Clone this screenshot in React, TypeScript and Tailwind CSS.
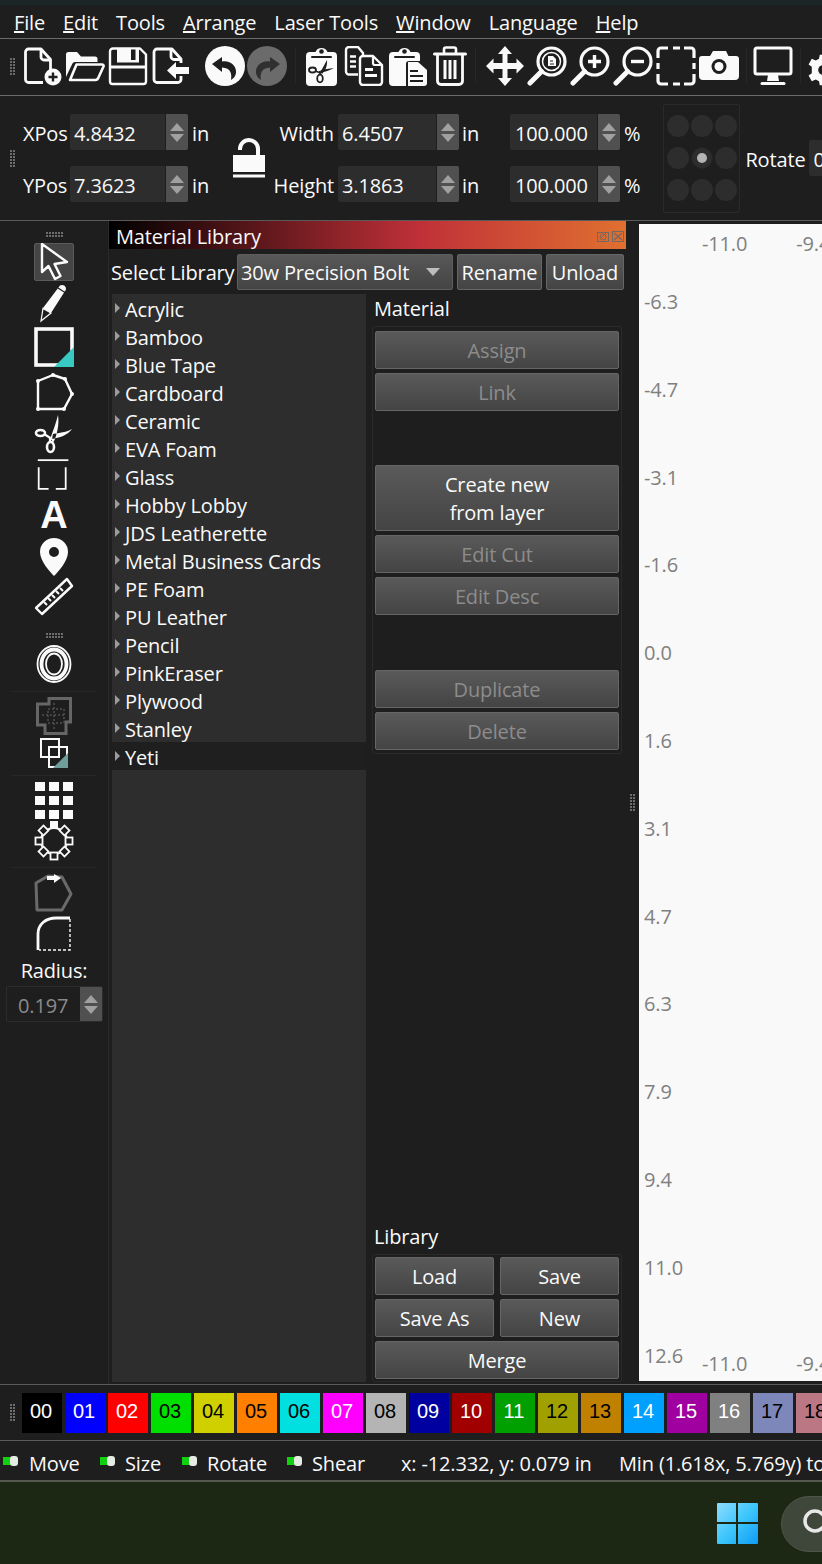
import React from "react";

const W = "#fafafa";

const Svg = ({ s = 40, h, vb, children, className }: any) => (
  <svg width={s} height={h ?? s} viewBox={vb ?? `0 0 40 ${h ?? s}`} fill="none" className={className ?? "shrink-0"}>
    {children}
  </svg>
);

const Gap = ({ w }: any) => <div className={`shrink-0 ${w}`} />;

const NewIcon = () => (
  <Svg>
    <path d="M3.500 6a3 3 0 0 1 3-3h12.500l9.500 10.500V24M21 36.500H6.500a3 3 0 0 1-3-3V6" stroke={W} strokeWidth="2.800" strokeLinejoin="round" />
    <path d="M19 3v8a3 3 0 0 0 3 3h7" stroke={W} strokeWidth="2.800" />
    <circle cx="31" cy="31" r="8.500" fill={W} />
    <path d="M31 26.500v9M26.500 31h9" stroke="#1e1e1e" strokeWidth="2.400" />
  </Svg>
);
const OpenIcon = () => (
  <Svg>
    <path d="M1 31V8.500a2.500 2.500 0 0 1 2.500-2.500H12l4 4.500h14a2.500 2.500 0 0 1 2.500 2.500v3H10a3 3 0 0 0-2.800 2L1 31Z" fill={W} />
    <path d="M11.500 18.500H37a1.500 1.500 0 0 1 1.500 2L33 32.500a3 3 0 0 1-2.500 1.500H5Z" stroke={W} strokeWidth="2.600" strokeLinejoin="round" />
  </Svg>
);
const SaveIcon = () => (
  <Svg>
    <path d="M2 5.500a3 3 0 0 1 3-3H32l6 6v27a2.500 2.500 0 0 1-2.500 2.500H4.500A2.500 2.500 0 0 1 2 35.500V5.500Z" stroke={W} strokeWidth="2.400" strokeLinejoin="round" />
    <path d="M9 2.500h22v14H9Z" fill={W} />
    <path d="M23 3.500h4.500v10.500H23Z" fill="#1e1e1e" />
    <path d="M2 21h36" stroke={W} strokeWidth="2.800" />
  </Svg>
);
const ImportIcon = () => (
  <Svg>
    <path d="M30 17v-4l-9-10H6a3 3 0 0 0-3 3v27.500a3 3 0 0 0 3 3h21a3 3 0 0 0 3-3V30" stroke={W} strokeWidth="2.800" strokeLinejoin="round" />
    <path d="M20 3.500v7a3 3 0 0 0 3 3h6.500" stroke={W} strokeWidth="2.800" />
    <path d="M16 24.500 25 16v5h13v7H25v5Z" fill={W} />
  </Svg>
);
const UndoIcon = ({ gray }: any) => (
  <Svg>
    <circle cx="20" cy="20" r="20" fill={gray ? "#6b6b6b" : W} />
    <g transform={gray ? "translate(40 0) scale(-1 1)" : undefined}>
      <path d="M7 18 17 11v4.500C25 14 32 20 31 27c-.5 3-2 5-5 7 1-6 0-12-9-12.500V26Z" fill={gray ? "#303030" : "#1e1e1e"} />
    </g>
  </Svg>
);
const CutPasteIcon = () => (
  <Svg s={31} h={40} vb="0 0 31 40">
    <path d="M4 6h5.500a6.500 6.500 0 0 1 12 0H27a4 4 0 0 1 4 4v26a4 4 0 0 1-4 4H4a4 4 0 0 1-4-4V10a4 4 0 0 1 4-4Z" fill={W} />
    <circle cx="15.500" cy="5.500" r="2.300" fill="#1e1e1e" />
    <path d="M6 11h19" stroke="#1e1e1e" strokeWidth="2" strokeLinecap="round" />
    <path d="M21 14c.5 5-1 10-5 14l-1.500-2c2-4 4.500-8 6.500-12ZM28 22c-4 2.500-8 3.500-12.500 4.500l-1-2.500c4-.5 9-1.500 13.500-2Z" fill="#1e1e1e" />
    <ellipse cx="6.500" cy="24" rx="3.500" ry="2.500" stroke="#1e1e1e" strokeWidth="1.800" />
    <ellipse cx="14" cy="32.500" rx="2.800" ry="3.800" stroke="#1e1e1e" strokeWidth="1.800" />
    <path d="M9 25l6 2M14 29v-4" stroke="#1e1e1e" strokeWidth="1.800" />
  </Svg>
);
const CopyIcon = () => (
  <Svg>
    <path d="M14 28.500H5a3 3 0 0 1-3-3V4a3 3 0 0 1 3-3h9l5 6v3" stroke={W} strokeWidth="2.400" strokeLinejoin="round" />
    <path d="M6 10.500h6M6 15.500h6M6 20.500h6" stroke={W} strokeWidth="2.400" />
    <path d="M19 10h10l9 9v17a3 3 0 0 1-3 3H19a3 3 0 0 1-3-3V13a3 3 0 0 1 3-3Z" stroke={W} strokeWidth="2.400" strokeLinejoin="round" />
    <path d="M29 10v7a2 2 0 0 0 2 2h7" stroke={W} strokeWidth="2.200" />
    <path d="M21 22h8v3h-8ZM21 28h12v3H21Z" fill={W} />
  </Svg>
);
const PasteIcon = () => (
  <Svg s={38} h={40} vb="0 0 38 40">
    <path d="M4 6h5.500a6.500 6.500 0 0 1 12 0H27a4 4 0 0 1 4 4v5H20a3 3 0 0 0-3 3v22H4a4 4 0 0 1-4-4V10a4 4 0 0 1 4-4Z" fill={W} />
    <circle cx="15.500" cy="5.500" r="2.300" fill="#1e1e1e" />
    <path d="M6 11h19" stroke="#1e1e1e" strokeWidth="2" strokeLinecap="round" />
    <path d="M19 16h10l9 8v13a3 3 0 0 1-3 3H19Z" fill={W} />
    <path d="M21 25h8M21 30h13M21 35h13" stroke="#1e1e1e" strokeWidth="2.200" />
  </Svg>
);
const TrashIcon = () => (
  <Svg s={34} h={40} vb="0 0 34 40">
    <path d="M1.500 8h31" stroke={W} strokeWidth="3" strokeLinecap="round" />
    <path d="M11 7V3.500a2 2 0 0 1 2-2h8a2 2 0 0 1 2 2V7" stroke={W} strokeWidth="2.600" />
    <path d="M4.500 9v26a3.500 3.500 0 0 0 3.500 3.500h18a3.500 3.500 0 0 0 3.500-3.500V9" stroke={W} strokeWidth="2.800" />
    <path d="M10.500 14v19h3V14ZM15.500 14v19h3V14ZM20.500 14v19h3V14Z" fill={W} />
  </Svg>
);
const MoveIcon = () => (
  <Svg s={38} h={40} vb="0 0 38 40">
    <path d="M19 0l7 8h-4.500v9H30.500v-4.500L38 20l-7.500 7.500V23H21.500v9H26l-7 8-7-8h4.500v-9H7.500v4.500L0 20l7.500-7.500V17h9V8H12Z" fill={W} />
  </Svg>
);
const Mag = ({ children }: any) => (
  <Svg>
    <circle cx="24.500" cy="15.500" r="13.500" stroke={W} strokeWidth="3.200" />
    <path d="M14.500 25.500 3 37" stroke={W} strokeWidth="5" strokeLinecap="round" />
    {children}
  </Svg>
);
const DashedIcon = () => (
  <Svg>
    <path d="M2 12V5a3 3 0 0 1 3-3h7M17 2h7M28 2h7a3 3 0 0 1 3 3v7M38 17v6M38 28v7a3 3 0 0 1-3 3h-7M24 38h-7M12 38H5a3 3 0 0 1-3-3v-7M2 23v-6" stroke={W} strokeWidth="3.200" />
  </Svg>
);
const CameraIcon = () => (
  <Svg>
    <path d="M3 10h8l3-5h13l2.500 5H37a3 3 0 0 1 3 3v17a4 4 0 0 1-4 4H4a4 4 0 0 1-4-4V13a3 3 0 0 1 3-3Z" fill={W} />
    <circle cx="20" cy="20.500" r="7.500" fill="#1e1e1e" />
    <circle cx="20" cy="20.500" r="4.500" fill={W} />
  </Svg>
);
const MonitorIcon = () => (
  <Svg>
    <rect x="2" y="2" width="36" height="26" rx="2" stroke={W} strokeWidth="3" />
    <path d="M15 29h10l1 6h-12Z" fill={W} />
    <path d="M9 37.500h22" stroke={W} strokeWidth="3" strokeLinecap="round" />
  </Svg>
);
const GearIcon = () => (
  <Svg s={32} vb="0 0 40 40" className="shrink-0 mt-[7px]">
    <path d="M16 1h8l1 5 4 2 5-2 4 7-4 3v8l4 3-4 7-5-2-4 2-1 5h-8l-1-5-4-2-5 2-4-7 4-3v-8L2 13l4-7 5 2 4-2Z" fill={W} />
    <circle cx="20" cy="20" r="6" fill="#1e1e1e" />
  </Svg>
);

const ToolSep = () => <div className="w-px h-[34px] bg-[#282828] shrink-0" />;

const Grip = ({ className }: any) => (
  <div className={`grid grid-cols-2 gap-px shrink-0 w-[5px] ${className ?? ""}`}>
    {Array.from({ length: 12 }).map((_, i) => (
      <span key={i} className="w-[2px] h-[2px] bg-[#6c6c6c]" />
    ))}
  </div>
);
const HGrip = () => (
  <div className="grid grid-cols-6 gap-px w-[17px] mx-auto">
    {Array.from({ length: 12 }).map((_, i) => (
      <span key={i} className="w-[2px] h-[2px] bg-[#6c6c6c]" />
    ))}
  </div>
);

const Spin = ({ value, w, dim, tw = "w-[23px]", pl = "pl-[4px]" }: any) => (
  <div className={`flex h-[36px] shrink-0 rounded-[2px] overflow-hidden ${w} ${dim ? "border border-[#2c2c2c]" : "bg-[#2d2d2d]"}`}>
    <div className={`flex-1 flex items-center pt-[4px] ${pl} ${dim ? "text-[#8a8a8a]" : ""}`}>{value}</div>
    <div className={`${tw} flex flex-col items-center justify-center gap-[3px] bg-[#505050] border-l border-[#1e1e1e]`}>
      <span className="w-0 h-0 border-x-[7px] border-x-transparent border-b-[8px] border-b-[#a0a0a0]" />
      <span className="w-0 h-0 border-x-[7px] border-x-transparent border-t-[8px] border-t-[#a0a0a0]" />
    </div>
  </div>
);

const Btn = ({ children, off, className }: any) => (
  <div
    className={`flex shrink-0 items-center justify-center text-center rounded-[2px] border border-[#666] bg-gradient-to-b from-[#5a5a5a] to-[#444] leading-[28px] pt-[2px] ${
      off ? "text-[#8c8c8c]" : ""
    } ${className ?? "h-[38px]"}`}
  >
    {children}
  </div>
);

const Lab = ({ children, className }: any) => <span className={`pt-[4px] ${className ?? ""}`}>{children}</span>;

const materials = [
  "Acrylic","Bamboo","Blue Tape","Cardboard","Ceramic","EVA Foam","Glass","Hobby Lobby","JDS Leatherette",
  "Metal Business Cards","PE Foam","PU Leather","Pencil","PinkEraser","Plywood","Stanley","Yeti",
];

const swatches: [string, string, string][] = [
  ["00","#000000","#fff"],["01","#0000ff","#fff"],["02","#ff0000","#fff"],["03","#00e000","#000"],
  ["04","#d0d000","#000"],["05","#ff8000","#000"],["06","#00e0e0","#000"],["07","#ff00ff","#fff"],
  ["08","#b4b4b4","#000"],["09","#0000a0","#fff"],["10","#a00000","#fff"],["11","#00a000","#fff"],
  ["12","#a0a000","#000"],["13","#c08000","#000"],["14","#00a0ff","#fff"],["15","#a000a0","#fff"],
  ["16","#808080","#fff"],["17","#7d87b9","#000"],["18","#bb7784","#000"],
];

const Toggle = () => (
  <span className="relative inline-block w-[15px] h-[10px] shrink-0">
    <span className="absolute left-0 top-[1px] w-[10px] h-[8px] bg-[#10d010]" />
    <span className="absolute right-0 top-0 w-[8px] h-[10px] rounded-[3px] bg-[#e4ece4]" />
  </span>
);

const SideSep = () => <div className="h-px w-[86px] shrink-0 bg-[#282828] mx-auto" />;

const Slot = ({ children, className }: any) => (
  <div className={`flex shrink-0 justify-center items-center ${className}`}>{children}</div>
);

function LeftTools() {
  return (
    <div className="w-[109px] shrink-0 border-r border-[#2a2a2a] flex flex-col items-stretch">
      <div className="h-[14px] shrink-0 pt-[11px]"><HGrip /></div>
      <Slot className="h-[8px]" />
      <div className="mx-auto shrink-0 w-[40px] h-[38px] rounded-[2px] bg-[#454545] border border-[#5a5a5a] flex items-center justify-center">
        <Svg s={30} h={38} vb="0 0 30 38">
          <path d="M3 1v28l6.500-6L16 36l5.500-3-6-12 12.500-2Z" fill="#3a3a3a" stroke={W} strokeWidth="2.400" strokeLinejoin="round" />
        </Svg>
      </div>
      <Slot className="h-[44px]">
        <Svg h={42} vb="0 0 40 42">
          <path d="M26 3.500a4 4 0 0 1 6 4L17 31l-10 8 2-13Z" fill={W} />
          <path d="M9 26.500l8 4.500-10 8Z" fill="#1e1e1e" stroke={W} strokeWidth="1.200" />
          <path d="M24 6l7 4.500" stroke="#1e1e1e" strokeWidth="1.200" />
        </Svg>
      </Slot>
      <Slot className="h-[44px]">
        <Svg>
          <rect x="2" y="2" width="36" height="36" stroke={W} strokeWidth="3.600" />
          <path d="M40 20v20H20Z" fill="#38c9c2" />
        </Svg>
      </Slot>
      <Slot className="h-[45px] pt-[2px]">
        <Svg>
          <path d="M19 2 31 6l7 15-8 15H4V8Z" stroke={W} strokeWidth="2.400" strokeLinejoin="round" />
          <g fill={W}><circle cx="19" cy="2" r="2" /><circle cx="31" cy="6" r="2" /><circle cx="38" cy="21" r="2" /><circle cx="30" cy="36" r="2" /><circle cx="4" cy="36" r="2" /><circle cx="4" cy="8" r="2" /></g>
        </Svg>
      </Slot>
      <Slot className="h-[42px]">
        <Svg>
          <path d="M24 0c1.500 9-1 21-5 28l-2.500-5C19 16 22 8 24 0ZM38 14c-5 3-13 4-19 5l-1 5c7-1 16-4 20-10Z" fill={W} />
          <ellipse cx="6.500" cy="18" rx="4.500" ry="3" stroke={W} strokeWidth="2.600" />
          <ellipse cx="16.500" cy="32" rx="3.500" ry="5" stroke={W} strokeWidth="2.600" />
          <path d="M10 19l8 5M16 27v-5" stroke={W} strokeWidth="2.200" />
        </Svg>
      </Slot>
      <Slot className="h-[38px]">
        <Svg s={36}>
          <path d="M2 1.500h34" stroke={W} strokeWidth="2" />
          <path d="M3 9.500v24h11M33 9.500v24H22" stroke={W} strokeWidth="2" />
        </Svg>
      </Slot>
      <Slot className="h-[42px]">
        <span className="text-[#fafafa] font-bold text-[38px] leading-[38px] [font-family:'Liberation_Sans',sans-serif]">A</span>
      </Slot>
      <Slot className="h-[42px]">
        <Svg s={30} h={40} vb="0 0 30 40">
          <path fillRule="evenodd" d="M15 1a14 14 0 0 1 14 14c0 9-10 20-14 24C11 35 1 24 1 15A14 14 0 0 1 15 1Zm0 9a5 5 0 1 0 0 10 5 5 0 0 0 0-10Z" fill={W} />
        </Svg>
      </Slot>
      <Slot className="h-[38px]">
        <Svg>
          <path d="M33 2 38 9 8 37 2 31Z" stroke={W} strokeWidth="2.400" strokeLinejoin="round" />
          <path d="M10 25l3 3M14 21l3 3M18 18l3 3M22 14l3 3M26 11l3 3" stroke={W} strokeWidth="2" />
        </Svg>
      </Slot>
      <div className="h-[19px] shrink-0 pt-[17px]"><HGrip /></div>
      <Slot className="h-[50px] pt-[8px]">
        <Svg s={36} h={38} vb="0 0 36 38">
          <ellipse cx="18" cy="19" rx="16.500" ry="18" stroke={W} strokeWidth="1.800" />
          <ellipse cx="18" cy="19" rx="12.500" ry="14.500" stroke={W} strokeWidth="3.800" />
          <ellipse cx="18" cy="19" rx="8" ry="10.500" stroke={W} strokeWidth="1.800" />
        </Svg>
      </Slot>
      <Slot className="h-[6px]" />
      <SideSep />
      <Slot className="h-[46px] pt-[2px]">
        <Svg s={36} h={38} vb="0 0 36 38">
          <path d="M1.500 7H13V1.500H34.500V25H30V36.500H9V28H1.500Z" stroke="#666" strokeWidth="3" />
          <path d="M12 12h16v14H12ZM18 6v26M6 18h22" stroke="#5c5c5c" strokeWidth="1.500" strokeDasharray="2 2" opacity="0.800" />
        </Svg>
      </Slot>
      <Slot className="h-[30px]">
        <Svg s={28} h={30} vb="0 0 28 30">
          <rect x="1" y="1" width="18" height="18" stroke={W} strokeWidth="2" />
          <rect x="9" y="9" width="18" height="20" stroke={W} strokeWidth="2" />
          <path d="M28 15v15H13Z" fill="#6f9d9a" />
        </Svg>
      </Slot>
      <Slot className="h-[7px]" />
      <SideSep />
      <Slot className="h-[44px] pt-[5px]">
        <div className="grid grid-cols-3 gap-x-[4px] gap-y-[5px]">
          {Array.from({ length: 9 }).map((_, i) => (
            <span key={i} className="w-[10px] h-[9px] bg-[#fafafa]" />
          ))}
        </div>
      </Slot>
      <Slot className="h-[41px]">
        <Svg>
          <circle cx="20" cy="20" r="13" stroke={W} strokeWidth="2" />
          <rect x="16" y="0" width="8" height="8" fill={W} />
          <g fill="#1e1e1e" stroke={W} strokeWidth="1.800">
            <rect x="16.500" y="31.500" width="7" height="7" />
            <rect x="1.500" y="16.500" width="7" height="7" />
            <rect x="31.500" y="16.500" width="7" height="7" />
            <rect x="6" y="6" width="7" height="7" transform="rotate(45 9.500 9.500)" />
            <rect x="27" y="6" width="7" height="7" transform="rotate(45 30.500 9.500)" />
            <rect x="6" y="27" width="7" height="7" transform="rotate(45 9.500 30.500)" />
            <rect x="27" y="27" width="7" height="7" transform="rotate(45 30.500 30.500)" />
          </g>
        </Svg>
      </Slot>
      <Slot className="h-[6px]" />
      <SideSep />
      <Slot className="h-[45px] pt-[6px]">
        <Svg>
          <path d="M14 2 28 3 37 20 28 36H3L2 9Z" stroke="#6a6a6a" strokeWidth="3" strokeLinejoin="round" />
          <path d="M13 2h7V0l7 4-7 5V6h-7Z" fill={W} />
        </Svg>
      </Slot>
      <Slot className="h-[42px]">
        <Svg s={36} h={36} vb="0 0 36 36">
          <path d="M2 34V18C2 8 10 2 20 2h14" stroke={W} strokeWidth="2.800" />
          <path d="M34 3v31H3" stroke={W} strokeWidth="1.400" strokeDasharray="3 2" />
        </Svg>
      </Slot>
      <div className="text-center shrink-0 h-[31px] leading-[31px]">Radius:</div>
      <div className="pl-[6px] shrink-0"><Spin value="0.197" w="w-[97px]" dim pl="pl-[11px]" /></div>
    </div>
  );
}

function Canvas() {
  const left = ["-6.3","-4.7","-3.1","-1.6","0.0","1.6","3.1","4.7","6.3","7.9","9.4","11.0","12.6"];
  return (
    <div className="flex-1 min-w-0 pt-[3px] pb-[3px]">
      <div className="relative h-full bg-[#f9f9f9] text-[#808080] overflow-hidden">
        <div className="absolute left-[63px] top-[6px] flex gap-[49px] whitespace-nowrap">
          <span>-11.0</span><span>-9.4</span>
        </div>
        <div className="absolute left-[63px] bottom-[3px] flex gap-[49px] whitespace-nowrap">
          <span>-11.0</span><span>-9.4</span>
        </div>
        <div className="absolute left-[5px] top-[64px] flex flex-col">
          {left.map((v) => (
            <span key={v} className="h-[87.800px] leading-[28px]">{v}</span>
          ))}
        </div>
      </div>
    </div>
  );
}

export default function App() {
  return (
    <div className="w-[822px] h-[1564px] bg-[#1e1e1e] overflow-hidden flex flex-col text-[#fafafa] text-[20px] leading-[28px] [font-family:'Open_Sans',sans-serif] tracking-[-0.15px]">
      {/* menu */}
      <div className="h-[39px] shrink-0 border-b border-[#6a6a6a] bg-[#1e1e1e] flex flex-col">
        <div className="h-[5px] bg-[#1b2427]" />
        <div className="flex-1 flex items-center pl-[14px] pt-[2px] gap-[18px] whitespace-nowrap">
          <span><u>F</u>ile</span><span><u>E</u>dit</span><span>Tools</span><span><u>A</u>rrange</span><span>Laser Tools</span><span><u>W</u>indow</span><span>Language</span><span><u>H</u>elp</span>
        </div>
      </div>
      {/* toolbar */}
      <div className="h-[57px] shrink-0 border-b border-[#6a6a6a] flex items-center pl-[10px] pb-[2px] overflow-hidden">
        <Grip className="mr-[7px]" />
        <div className="flex items-center gap-[3px] shrink-0">
          <NewIcon /><OpenIcon /><SaveIcon /><ImportIcon />
        </div>
        <Gap w="w-[14px]" />
        <UndoIcon />
        <Gap w="w-[2px]" />
        <UndoIcon gray />
        <Gap w="w-[8px]" /><ToolSep /><Gap w="w-[10px]" />
        <CutPasteIcon />
        <Gap w="w-[7px]" />
        <CopyIcon />
        <Gap w="w-[5px]" />
        <PasteIcon />
        <Gap w="w-[6px]" />
        <TrashIcon />
        <Gap w="w-[8px]" /><ToolSep /><Gap w="w-[10px]" />
        <MoveIcon />
        <Gap w="w-[3px]" />
        <Mag>
          <circle cx="24.500" cy="15.500" r="9" stroke={W} strokeWidth="1.500" />
          <path d="M21 10h5l3 3v7h-8Z" fill={W} />
          <path d="M23 15h3M23 18h4" stroke="#1e1e1e" strokeWidth="1.200" />
        </Mag>
        <Gap w="w-[3px]" />
        <Mag><path d="M24.500 9v13M18 15.500h13" stroke={W} strokeWidth="3.400" /></Mag>
        <Gap w="w-[3px]" />
        <Mag><path d="M18 15.500h13" stroke={W} strokeWidth="3.400" /></Mag>
        <Gap w="w-[3px]" />
        <DashedIcon />
        <Gap w="w-[3px]" />
        <CameraIcon />
        <Gap w="w-[7px]" /><ToolSep /><Gap w="w-[6px]" />
        <MonitorIcon />
        <Gap w="w-[7px]" /><ToolSep /><Gap w="w-[6px]" />
        <GearIcon />
      </div>
      {/* property bar */}
      <div className="h-[125px] shrink-0 border-b border-[#5a5a5a] flex items-center whitespace-nowrap overflow-hidden">
        <Grip className="ml-[10px] mr-[8px]" />
        <div className="grid grid-cols-[47px_118px_auto] gap-y-[16px] items-center w-[192px] shrink-0">
          <Lab>XPos</Lab><Spin value="4.8432" w="w-[118px]" /><Lab className="pl-[4px]">in</Lab>
          <Lab>YPos</Lab><Spin value="7.3623" w="w-[118px]" /><Lab className="pl-[4px]">in</Lab>
        </div>
        <div className="w-[50px] flex justify-end shrink-0">
          <Svg s={32} h={40} vb="0 0 32 40">
            <path d="M7 12v-1a9 9 0 0 1 18 0v7" stroke={W} strokeWidth="4" />
            <path d="M0 17h32v17H0Z" fill={W} />
            <path d="M0 36.500h32v3H0Z" fill={W} />
          </Svg>
        </div>
        <Gap w="w-[4px]" />
        <div className="grid grid-cols-[69px_121px_51px_110px_auto] gap-y-[16px] items-center shrink-0">
          <Lab className="text-right pr-[4px]">Width</Lab><Spin value="6.4507" w="w-[121px]" /><Lab className="pl-[3px]">in</Lab><Spin value="100.000" w="w-[110px]" pl="pl-[5px]" /><Lab className="pl-[4px]">%</Lab>
          <Lab className="text-right pr-[4px]">Height</Lab><Spin value="3.1863" w="w-[121px]" /><Lab className="pl-[3px]">in</Lab><Spin value="100.000" w="w-[110px]" pl="pl-[5px]" /><Lab className="pl-[4px]">%</Lab>
        </div>
        <Gap w="w-[23px]" />
        <div className="w-[77px] h-[109px] shrink-0 border border-[#2a2a2a] rounded-[2px] grid grid-cols-3 content-center justify-items-center gap-y-[10px] px-[2px]">
          {Array.from({ length: 9 }).map((_, i) => (
            <span key={i} className={`w-[22px] h-[22px] rounded-full bg-[#2d2d2d] flex items-center justify-center ${i === 4 ? "border border-[#242424]" : ""}`}>
              {i === 4 && <span className="w-[10px] h-[10px] rounded-full bg-[#b4b4b4]" />}
            </span>
          ))}
        </div>
        <Lab className="ml-[5px] shrink-0">Rotate</Lab>
        <div className="ml-[4px] h-[36px] w-[60px] bg-[#2d2d2d] rounded-[2px] flex items-center pl-[4px] pt-[4px] shrink-0">0</div>
      </div>
      {/* main */}
      <div className="h-[1163px] shrink-0 flex">
        <LeftTools />
        <div className="w-[517px] shrink-0 flex flex-col">
          <div className="h-[28px] shrink-0 bg-[linear-gradient(90deg,#000_0%,#c03038_60%,#e07030_100%)] flex items-center pl-[7px] justify-between pr-[2px] pt-[3px]">
            <span>Material Library</span>
            <span className="flex gap-[3px] items-center">
              <svg width="12" height="11" viewBox="0 0 12 11" fill="none"><rect x="0.500" y="1.500" width="11" height="9" stroke="#77685f" /><path d="M3 8l6-6" stroke="#77685f" /><circle cx="6" cy="6" r="3" stroke="#77685f" /></svg>
              <svg width="12" height="11" viewBox="0 0 12 11" fill="none"><rect x="0.500" y="0.500" width="11" height="10" stroke="#77685f" /><path d="M2 2l8 7M10 2 2 9" stroke="#77685f" strokeWidth="1.300" /></svg>
            </span>
          </div>
          <div className="h-[45px] shrink-0 flex items-center gap-[4px] pl-[2px] whitespace-nowrap">
            <span className="w-[122px] pt-[2px]">Select Library</span>
            <div className="w-[216px] h-[36px] bg-gradient-to-b from-[#585858] to-[#444] border border-[#5e5e5e] rounded-[2px] flex items-center justify-between pl-[3px] pr-[12px]">
              <span className="pt-[2px]">30w Precision Bolt</span>
              <span className="w-0 h-0 border-x-[7px] border-x-transparent border-t-[8px] border-t-[#bdbdbd]" />
            </div>
            <Btn className="w-[85px] h-[36px]">Rename</Btn>
            <Btn className="w-[78px] h-[36px]">Unload</Btn>
          </div>
          <div className="flex-1 min-h-0 flex pl-[3px] pb-[2px]">
            <div className="w-[254px] shrink-0 bg-[#2d2d2d]">
              {materials.map((m) => (
                <div key={m} className={`h-[28px] flex items-center pl-[3px] gap-[5px] ${m === "Yeti" ? "bg-[#1f1f1f]" : ""}`}>
                  <span className="w-0 h-0 border-y-[5px] border-y-transparent border-l-[5px] border-l-[#9c9c9c]" />
                  <span className="pt-[4px]">{m}</span>
                </div>
              ))}
            </div>
            <div className="w-[256px] shrink-0 pl-[6px] flex flex-col">
              <div className="h-[32px] shrink-0 pl-[2px] leading-[30px]">Material</div>
              <div className="w-[250px] shrink-0 border border-[#2a2a2a] rounded-[2px] px-[2px] pt-[4px] pb-[3px] flex flex-col gap-[4px]">
                <Btn off>Assign</Btn>
                <Btn off>Link</Btn>
                <div className="h-[46px] shrink-0" />
                <Btn className="h-[66px]"><span>Create new<br />from layer</span></Btn>
                <Btn off>Edit Cut</Btn>
                <Btn off>Edit Desc</Btn>
                <div className="h-[47px] shrink-0" />
                <Btn off>Duplicate</Btn>
                <Btn off>Delete</Btn>
              </div>
              <div className="flex-1" />
              <div className="h-[31px] shrink-0 pl-[2px] leading-[28px]">Library</div>
              <div className="w-[250px] shrink-0 border border-[#2a2a2a] rounded-[2px] px-[2px] pt-[2px] pb-[2px] grid grid-cols-2 gap-x-[6px] gap-y-[4px]">
                <Btn>Load</Btn><Btn>Save</Btn>
                <Btn>Save As</Btn><Btn>New</Btn>
                <Btn className="col-span-2 h-[38px]">Merge</Btn>
              </div>
            </div>
          </div>
        </div>
        <div className="w-[13px] shrink-0 flex items-center justify-center"><Grip /></div>
        <Canvas />
      </div>
      {/* colour bar */}
      <div className="h-[57px] shrink-0 border-y border-[#5a5a5a] flex items-center pl-[10px] overflow-hidden">
        <Grip className="mr-[7px]" />
        <div className="flex gap-[3px] shrink-0">
          {swatches.map(([n, bg, fg]) => (
            <div key={n} className="w-[40px] h-[40px] shrink-0 flex items-center justify-center pb-[3px] pr-[2px] text-[20px] tracking-normal [font-family:'Liberation_Sans',sans-serif]" style={{ backgroundColor: bg, color: fg }}>{n}</div>
          ))}
        </div>
      </div>
      {/* status */}
      <div className="h-[41px] shrink-0 border-b-[2px] border-[#55584f] flex items-center whitespace-nowrap overflow-hidden">
        <div className="pl-[3px] flex items-center shrink-0">
          <Toggle /><span className="ml-[11px] w-[71px] pt-[6px]">Move</span>
          <Toggle /><span className="ml-[10px] w-[57px] pt-[6px]">Size</span>
          <Toggle /><span className="ml-[10px] w-[80px] pt-[6px]">Rotate</span>
          <Toggle /><span className="ml-[10px] w-[89px] pt-[6px]">Shear</span>
          <span className="w-[218px] pt-[6px]">x: -12.332, y: 0.079 in</span>
          <span className="pt-[6px]">Min (1.618x, 5.769y) to</span>
        </div>
      </div>
      {/* taskbar */}
      <div className="flex-1 bg-[#1c2714] flex items-center pl-[717px] pt-[1px]">
        <svg width="41" height="41" viewBox="0 0 41 41" className="shrink-0">
          <defs>
            <linearGradient id="win" x1="0" y1="0" x2="1" y2="1">
              <stop offset="0" stopColor="#8fdcff" />
              <stop offset="0.500" stopColor="#3ec6fc" />
              <stop offset="1" stopColor="#0f9cf5" />
            </linearGradient>
          </defs>
          <path d="M1 0h18v19H0V1a1 1 0 0 1 1-1ZM21 0h19a1 1 0 0 1 1 1v18H21ZM0 21h19v20H1a1 1 0 0 1-1-1ZM21 21h20v19a1 1 0 0 1-1 1H21Z" fill="url(#win)" />
        </svg>
        <div className="ml-[23px] w-[80px] h-[56px] shrink-0 rounded-l-[28px] bg-[#3f463a] border border-[#4f564a] flex items-center pl-[20px]">
          <svg width="32" height="32" viewBox="0 0 32 32" fill="none">
            <circle cx="13" cy="13" r="10" stroke="#e8e8e8" strokeWidth="3.500" />
            <path d="M21 21l9 9" stroke="#e8e8e8" strokeWidth="3.500" strokeLinecap="round" />
          </svg>
        </div>
      </div>
    </div>
  );
}
